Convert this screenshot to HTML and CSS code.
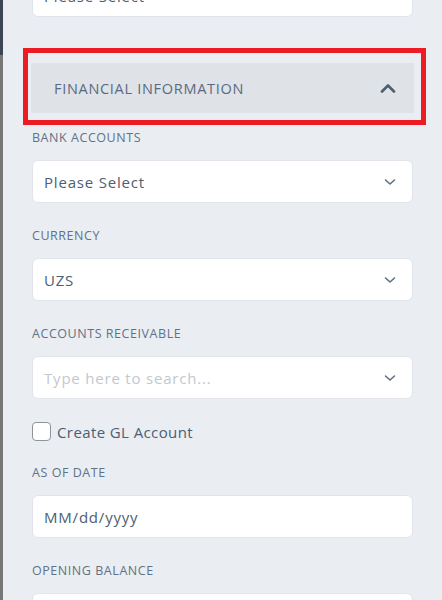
FILE: index.html
```html
<!DOCTYPE html>
<html>
<head>
<title>Customer - Financial Information</title>
<link rel="stylesheet" href="styles.css">
</head>
<body>
<div class="edge"></div>
<div class="form">
    <div class="field field-first">
        <div class="control">
            <span class="value">Please Select</span>
        </div>
    </div>

    <div class="section">
        <div class="section-head">
            <span>FINANCIAL INFORMATION</span>
            <svg class="chev-up" width="16" height="10" viewBox="0 0 16 10">
                <path d="M2 8.5 L8 2.5 L14 8.5" fill="none" stroke="#4d5e73" stroke-width="2.6" stroke-linecap="round" stroke-linejoin="round"/>
            </svg>
        </div>
        <div class="highlight"></div>
    </div>

    <div class="field">
        <label>BANK ACCOUNTS</label>
        <div class="control">
            <span class="value">Please Select</span>
            <svg class="chev" width="12" height="8" viewBox="0 0 12 8">
                <path d="M1.5 2 L6 6 L10.5 2" fill="none" stroke="#5f6f83" stroke-width="1.6" stroke-linecap="round" stroke-linejoin="round"/>
            </svg>
        </div>
    </div>

    <div class="field">
        <label>CURRENCY</label>
        <div class="control">
            <span class="value">UZS</span>
            <svg class="chev" width="12" height="8" viewBox="0 0 12 8">
                <path d="M1.5 2 L6 6 L10.5 2" fill="none" stroke="#5f6f83" stroke-width="1.6" stroke-linecap="round" stroke-linejoin="round"/>
            </svg>
        </div>
    </div>

    <div class="field field-tight">
        <label>ACCOUNTS RECEIVABLE</label>
        <div class="control">
            <span class="value placeholder">Type here to search...</span>
            <svg class="chev" width="12" height="8" viewBox="0 0 12 8">
                <path d="M1.5 2 L6 6 L10.5 2" fill="none" stroke="#5f6f83" stroke-width="1.6" stroke-linecap="round" stroke-linejoin="round"/>
            </svg>
        </div>
    </div>

    <div class="check-row">
        <span class="checkbox"></span>
        <span>Create GL Account</span>
    </div>

    <div class="field">
        <label>AS OF DATE</label>
        <div class="control">
            <span class="value">MM/dd/yyyy</span>
        </div>
    </div>

    <div class="field">
        <label>OPENING BALANCE</label>
        <div class="control"></div>
    </div>
</div>
</body>
</html>
```

FILE: styles.css
```css
body {
    margin: 0;
    display: flex;
    min-height: 100vh;
    background-color: #eaedf2;
    font-family: "Open Sans", "Liberation Sans", sans-serif;
    color: #4d5e73;
    overflow: hidden;
}

.edge {
    width: 3px;
    flex-shrink: 0;
    background: linear-gradient(#3c4652 0, #3c4652 55px, #777 55px);
}

.form {
    flex: 1;
    padding: 0 29px;
    margin-top: -26px;
}

.field {
    margin-bottom: 25px;
}

.field-first {
    margin-bottom: 46px;
}

.field-tight {
    margin-bottom: 23px;
}

label {
    display: block;
    font-size: 12.5px;
    line-height: 16px;
    color: #617285;
    letter-spacing: 0.55px;
    margin-bottom: 14px;
}

.control {
    height: 43px;
    box-sizing: border-box;
    background-color: #fff;
    border: 1px solid #e1e5eb;
    border-radius: 6px;
    display: flex;
    align-items: center;
    padding: 0 16px 0 11px;
}

.value {
    flex: 1;
    font-size: 15px;
    letter-spacing: 0.8px;
    color: #4d5e73;
}

.placeholder {
    color: #c3c8cf;
}

.chev {
    display: block;
}

.section {
    position: relative;
    margin: 0 -1px 17px;
}

.section-head {
    height: 50px;
    background-color: #dfe2e7;
    display: flex;
    align-items: center;
    justify-content: space-between;
    padding: 0 18px 0 23px;
    font-size: 14.5px;
    letter-spacing: 0.7px;
    color: #5a6b80;
}

.chev-up {
    display: block;
}

.highlight {
    position: absolute;
    left: -8px;
    top: -15px;
    right: -12px;
    bottom: -12px;
    border: 5px solid #ed1c24;
    box-sizing: border-box;
}

.check-row {
    display: flex;
    align-items: center;
    gap: 6px;
    font-size: 15px;
    letter-spacing: 0.4px;
    color: #4d5e73;
    margin-bottom: 24px;
    height: 19px;
}

.checkbox {
    width: 19px;
    height: 19px;
    box-sizing: border-box;
    border: 1px solid #8c939c;
    border-radius: 4px;
    background-color: #fff;
}
```
